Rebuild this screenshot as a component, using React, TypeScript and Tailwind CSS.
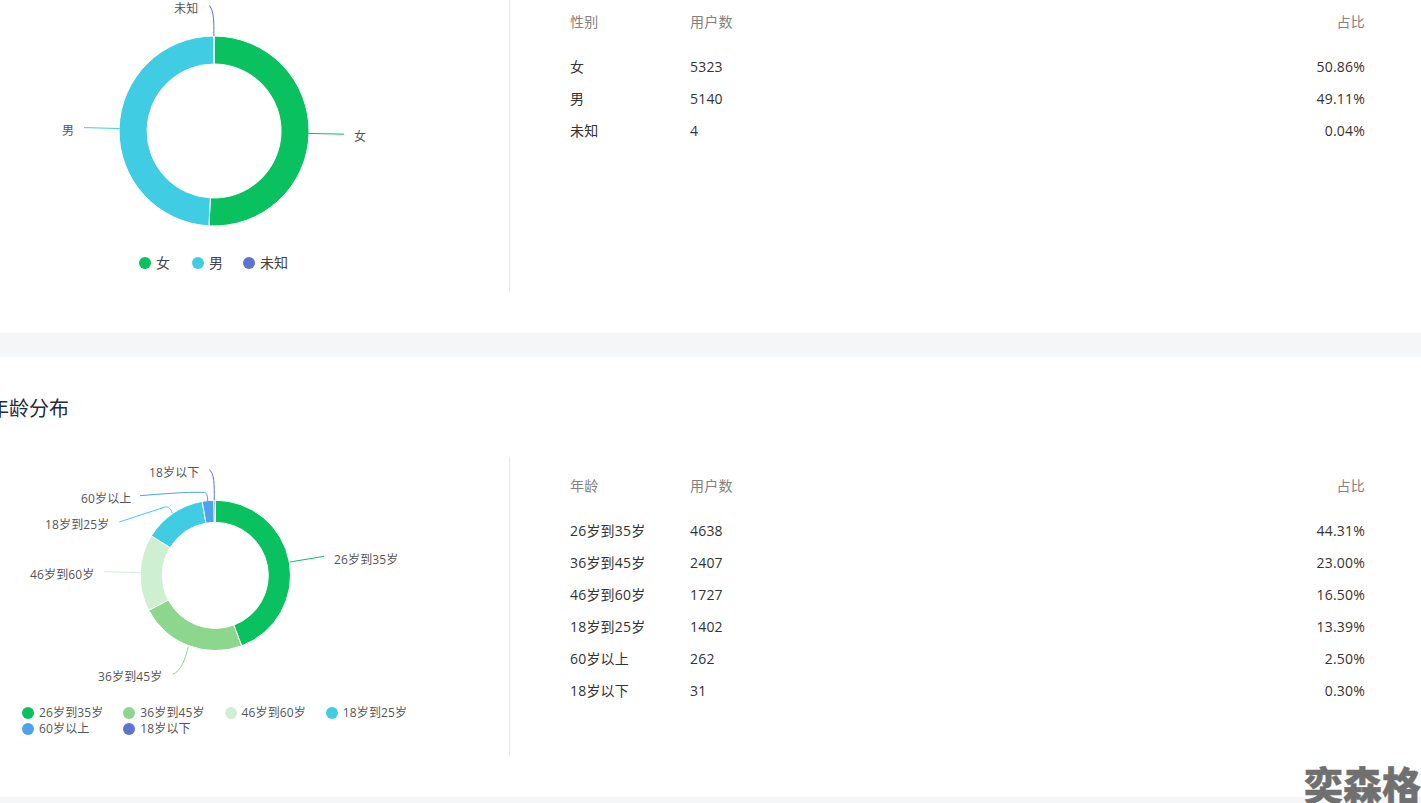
const GREEN = "#0ac15f", LGREEN = "#8dd68d", PALE = "#cfefd3", CYAN = "#40cde4", BLUE = "#4ea1ec", INDIGO = "#5e72cf";

type Slice = { color: string; ratio: number };
type Lead = { text: string; x: number; y: number; d: string; color: string };

function arc(cx: number, cy: number, R: number, r: number, a0: number, a1: number) {
  const p = (rad: number, a: number) => {
    const t = (a * Math.PI) / 180;
    return `${(cx + rad * Math.sin(t)).toFixed(2)} ${(cy - rad * Math.cos(t)).toFixed(2)}`;
  };
  const large = a1 - a0 > 180 ? 1 : 0;
  return `M${p(R, a0)}A${R} ${R} 0 ${large} 1 ${p(R, a1)}L${p(r, a1)}A${r} ${r} 0 ${large} 0 ${p(r, a0)}Z`;
}

function Donut({ cx, cy, R, r, slices, leads, viewBox, h }: { cx: number; cy: number; R: number; r: number; slices: Slice[]; leads: Lead[]; viewBox: string; h: string }) {
  const total = slices.reduce((s, x) => s + x.ratio, 0);
  let a = 0;
  return (
    <svg viewBox={viewBox} width={509} className={`block shrink-0 ${h}`}>
      {slices.map((s, i) => {
        const a0 = a;
        a += (s.ratio / total) * 360;
        return <path key={i} d={arc(cx, cy, R, r, a0, a)} fill={s.color} stroke="#fff" strokeWidth={1} />;
      })}
      {leads.map((l, i) => (
        <g key={i}>
          <path d={l.d} fill="none" stroke={l.color} strokeWidth={1} />
          <text x={l.x} y={l.y} fontSize={12} fill="#555" letterSpacing={0.15} dominantBaseline="central">{l.text}</text>
        </g>
      ))}
    </svg>
  );
}

function Table({ head, rows }: { head: string; rows: string[][] }) {
  return (
    <div className="flex-1 pl-[60px] pr-[56px] text-sm tracking-[0.2px]">
      <div className="flex h-[58px] items-center text-[#85807c]">
        <div className="w-[120px]">{head}</div>
        <div className="flex-1">用户数</div>
        <div>占比</div>
      </div>
      {rows.map((row) => (
        <div key={row[0]} className="flex h-8 items-center text-[#333]">
          <div className="w-[120px]">{row[0]}</div>
          <div className="flex-1">{row[1]}</div>
          <div>{row[2]}</div>
        </div>
      ))}
    </div>
  );
}

const Dot = ({ color }: { color: string }) => (
  <span className="mr-[5px] h-3 w-3 shrink-0 rounded-full" style={{ backgroundColor: color }} />
);

const age: [string, string, string, string][] = [
  ["26岁到35岁", "4638", "44.31%", GREEN],
  ["36岁到45岁", "2407", "23.00%", LGREEN],
  ["46岁到60岁", "1727", "16.50%", PALE],
  ["18岁到25岁", "1402", "13.39%", CYAN],
  ["60岁以上", "262", "2.50%", BLUE],
  ["18岁以下", "31", "0.30%", INDIGO],
];

export default function App() {
  return (
    <div
      className="relative h-[803px] w-[1421px] overflow-hidden bg-[#f5f6f8]"
      style={{ fontFamily: '"Open Sans","Noto Sans CJK SC",sans-serif' }}
    >
      <section className="h-[333px] overflow-hidden bg-white">
        <div className="-mt-[7px] flex h-[300px]">
          <div className="flex w-[510px] shrink-0 flex-col border-r border-[#e8e8e8]">
            <Donut
              cx={214} cy={131} R={95} r={67} viewBox="0 -7 509 260" h="h-[260px]"
              slices={[{ color: GREEN, ratio: 50.86 }, { color: CYAN, ratio: 49.11 }, { color: INDIGO, ratio: 0.04 }]}
              leads={[
                { text: "未知", x: 174, y: 8, d: "M213.9 36C213.9 20 214 12 209.5 5.5", color: INDIGO },
                { text: "男", x: 62, y: 130, d: "M119.5 128.5L84 127.6", color: CYAN },
                { text: "女", x: 354, y: 136, d: "M308 133.4L344 134.2", color: GREEN },
              ]}
            />
            <div className="flex h-5 items-center pl-[139px] text-sm text-[#444]">
              <Dot color={GREEN} /><span className="mr-[22px]">女</span>
              <Dot color={CYAN} /><span className="mr-[20px]">男</span>
              <Dot color={INDIGO} /><span>未知</span>
            </div>
          </div>
          <Table head="性别" rows={[["女", "5323", "50.86%"], ["男", "5140", "49.11%"], ["未知", "4", "0.04%"]]} />
        </div>
      </section>

      <section className="mt-6 h-[440px] bg-white pt-[37px]">
        <h2 className="-ml-[11px] mb-[33px] h-[30px] text-[20px] font-normal leading-[30px] text-[#1f2d3d]">年龄分布</h2>
        <div className="flex h-[300px]">
          <div className="flex w-[510px] shrink-0 flex-col border-r border-[#e8e8e8]">
            <Donut
              cx={215.3} cy={575.4} R={75.2} r={53} viewBox="0 457 509 248" h="h-[248px]"
              slices={[
                { color: GREEN, ratio: 44.31 }, { color: LGREEN, ratio: 23 }, { color: PALE, ratio: 16.5 },
                { color: CYAN, ratio: 13.39 }, { color: BLUE, ratio: 2.5 }, { color: INDIGO, ratio: 0.3 },
              ]}
              leads={[
                { text: "26岁到35岁", x: 334, y: 559.5, d: "M290 562L324 556.3", color: GREEN },
                { text: "36岁到45岁", x: 98, y: 676.5, d: "M188.3 646.7C185 660 181 671 172.7 674.3", color: LGREEN },
                { text: "46岁到60岁", x: 30, y: 574.5, d: "M140 572.7L104 571.7", color: PALE },
                { text: "18岁到25岁", x: 45, y: 524.5, d: "M172.3 513.3C171 509 169 506.5 165 507L119.3 522", color: CYAN },
                { text: "60岁以上", x: 81, y: 498.5, d: "M207.7 501C207.5 495 207 492.3 203 492.3C185 492 160 494 140 495.7", color: BLUE },
                { text: "18岁以下", x: 149, y: 472.5, d: "M214.3 500C214.3 485 214.5 473 209.3 469.7", color: INDIGO },
              ]}
            />
            <div className="grid w-[427px] grid-cols-4 pl-[22px] text-xs leading-4 tracking-[0.15px] text-[#555]">
              {age.map((a) => (
                <div key={a[0]} className="flex h-4 items-center">
                  <Dot color={a[3]} />
                  <span>{a[0]}</span>
                </div>
              ))}
            </div>
          </div>
          <Table head="年龄" rows={age.map((a) => [a[0], a[1], a[2]])} />
        </div>
      </section>

      <div className="absolute right-0 bottom-[-7px] text-[39px] font-black leading-[50px] text-[#707070] [-webkit-text-stroke:0.5px_#707070]">奕森格</div>
    </div>
  );
}
